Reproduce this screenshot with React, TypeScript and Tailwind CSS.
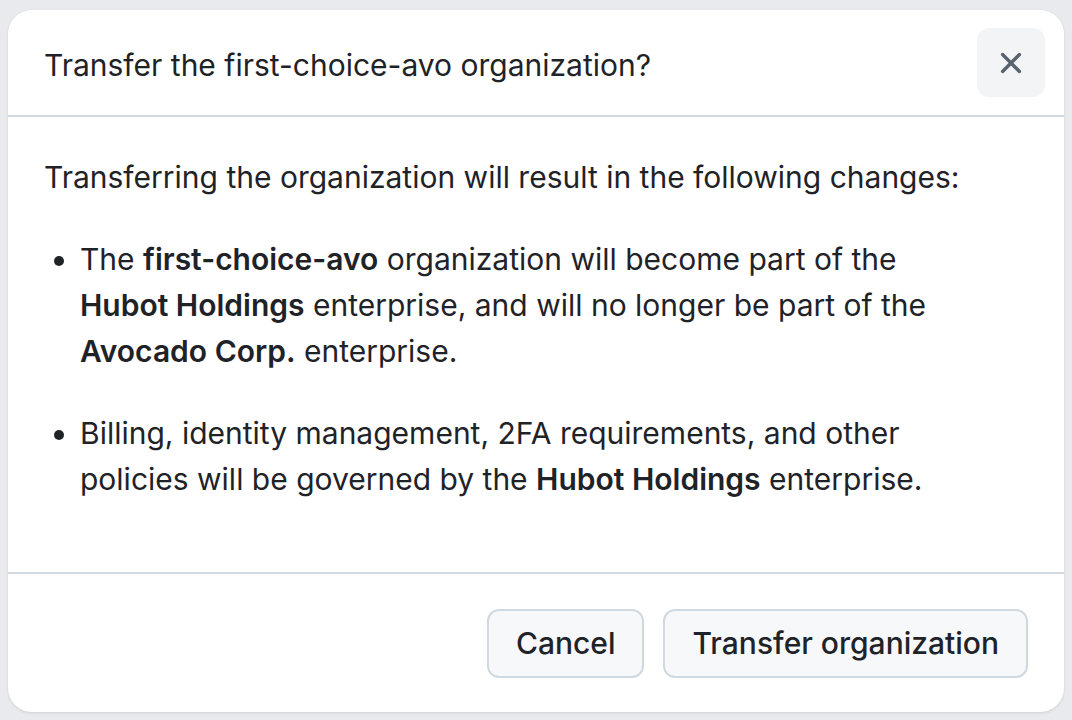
import React from "react";

export default function App() {
  return (
    <div
      className="w-full h-[720px] bg-[#e8eaed] pt-[10px] px-[8px] pb-[8px] text-[#1f2328]"
      style={{ fontFamily: "Inter, 'Noto Sans', sans-serif" }}
    >
      <div className="h-[702px] bg-white rounded-[24px] shadow-[0_1px_3px_rgba(31,35,40,0.12)] flex flex-col overflow-hidden">
        <div className="h-[107px] shrink-0 flex items-center justify-between pl-[36px] pr-[19px] border-b-2 border-[#d1d9e0]">
          <h1 className="text-[30px] font-normal leading-[40px] pt-[4px]">
            Transfer the first-choice-avo organization?
          </h1>
          <button className="w-[68px] h-[69px] rounded-[12px] bg-[#f3f4f6] flex items-center justify-center">
            <svg width="36" height="36" viewBox="0 0 16 16" fill="#59636e">
              <path d="M3.72 3.72a.75.75 0 0 1 1.06 0L8 6.94l3.22-3.22a.749.749 0 0 1 1.275.326.749.749 0 0 1-.215.734L9.06 8l3.22 3.22a.749.749 0 0 1-.326 1.275.749.749 0 0 1-.734-.215L8 9.06l-3.22 3.22a.751.751 0 0 1-1.042-.018.751.751 0 0 1-.018-1.042L6.94 8 3.72 4.78a.75.75 0 0 1 0-1.06Z" />
            </svg>
          </button>
        </div>
        <div className="flex-1 pt-[37px] pl-[36px] pr-[36px] text-[30px] leading-[46px]">
          <p className="mb-[36px]">
            Transferring the organization will result in the following changes:
          </p>
          <ul className="list-disc pl-[36px] pr-[80px] flex flex-col gap-[36px]">
            <li>
              The <strong className="font-semibold">first-choice-avo</strong> organization will become part of the{" "}
              <strong className="font-semibold">Hubot Holdings</strong> enterprise, and will no longer be part of the{" "}
              <strong className="font-semibold">Avocado Corp.</strong> enterprise.
            </li>
            <li>
              Billing, identity management, 2FA requirements, and other policies will be governed by the{" "}
              <strong className="font-semibold">Hubot Holdings</strong> enterprise.
            </li>
          </ul>
        </div>
        <div className="h-[140px] shrink-0 border-t-2 border-[#d1d9e0] flex items-center justify-end gap-[19px] pr-[36px]">
          <button className="h-[69px] px-[27px] rounded-[12px] border-2 border-[#d1d9e0] bg-[#f6f8fa] text-[30px] font-medium">
            Cancel
          </button>
          <button className="h-[69px] px-[27px] rounded-[12px] border-2 border-[#d1d9e0] bg-[#f6f8fa] text-[30px] font-medium">
            Transfer organization
          </button>
        </div>
      </div>
    </div>
  );
}
